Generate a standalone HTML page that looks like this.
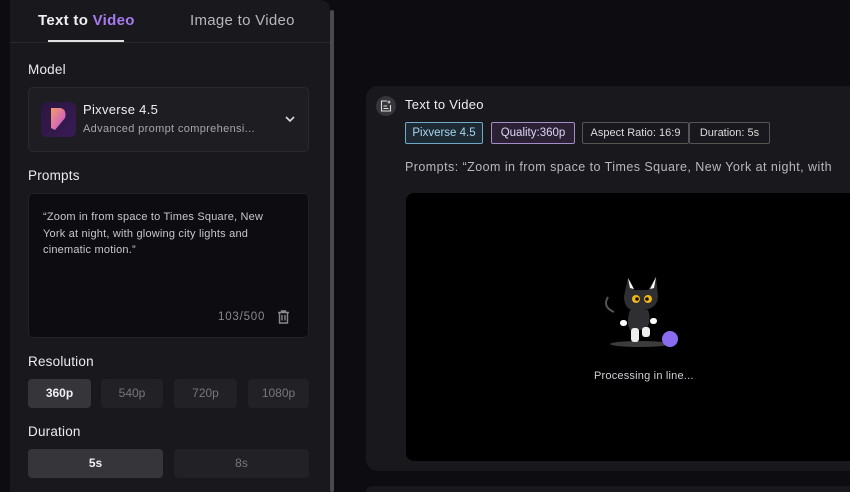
<!DOCTYPE html>
<html><head><style>
*{box-sizing:border-box;margin:0;padding:0}
html,body{width:850px;height:492px;overflow:hidden}
body{background:#0d0c11;font-family:"Liberation Sans",sans-serif;color:#e8e8ea;position:relative}
.panel{position:absolute;left:10px;top:0;width:320px;height:492px;background:#19181d;border-radius:0 10px 0 0}
.sb{position:absolute;left:330px;top:10px;width:4px;height:482px;background:#4a494e;border-radius:2px}
.tab{position:absolute;top:12px;font-size:15px;letter-spacing:.3px}
.lbl{position:absolute;left:28px;font-size:13.5px;color:#ececee;letter-spacing:.2px}
.box{position:absolute;border-radius:5px}
.btn{position:absolute;height:29px;border-radius:4px;background:#222126;color:#77767b;font-size:12px;text-align:center;line-height:29px}
.card{position:absolute;left:366px;top:86px;width:500px;height:385px;background:#19181d;border-radius:12px}
.tag{position:absolute;top:122px;height:22px;font-size:11.5px;line-height:20px;text-align:center;border:1px solid #555;color:#ddd;border-radius:2px;white-space:nowrap}
</style></head><body>
<div class="panel"></div>
<div class="sb"></div>
<div class="tab" style="left:38px;font-weight:bold;color:#f0f0f2">Text to <span style="color:#a77bf0">Video</span></div>
<div style="position:absolute;left:48px;top:40px;width:76px;height:2px;background:#e0e0e0"></div>
<div class="tab" style="left:190px;color:#b8b8bc">Image to Video</div>
<div style="position:absolute;left:10px;top:42px;width:320px;height:1px;background:#2a292e"></div>
<div class="lbl" style="top:62px">Model</div>
<div class="box" style="left:28px;top:87px;width:281px;height:65px;background:#1e1d22;border:1px solid #2a292e"></div>
<div style="position:absolute;left:41px;top:102px;width:35px;height:35px;border-radius:6px;background:linear-gradient(135deg,#2a1640,#3a1b55)"></div>
<svg style="position:absolute;left:47px;top:106px" width="24" height="28" viewBox="0 0 24 28"><defs><linearGradient id="g" x1="0" y1="0" x2="1" y2="1"><stop offset="0" stop-color="#f59a6a"/><stop offset="1" stop-color="#c04fe0"/></linearGradient></defs><path d="M4 2 L14 2 Q20 4 18 12 L8 24 L4 22 Z" fill="url(#g)"/></svg>
<div style="position:absolute;left:83px;top:102px;font-size:13px;color:#f0f0f2;letter-spacing:.3px">Pixverse 4.5</div>
<div style="position:absolute;left:83px;top:123px;font-size:11px;color:#a8a8ac;letter-spacing:.35px">Advanced prompt comprehensi...</div>
<svg style="position:absolute;left:285px;top:115px" width="10" height="8" viewBox="0 0 10 8"><path d="M1 2 L5 6 L9 2" stroke="#ddd" stroke-width="1.6" fill="none"/></svg>
<div class="lbl" style="top:168px">Prompts</div>
<div class="box" style="left:28px;top:193px;width:281px;height:145px;background:#0d0c10;border:1px solid #232227"></div>
<div style="position:absolute;left:43px;top:209px;width:236px;font-size:11px;line-height:16.5px;color:#c8c8cc;letter-spacing:.2px">“Zoom in from space to Times Square, New York at night, with glowing city lights and cinematic motion.”</div>
<div style="position:absolute;left:218px;top:311px;font-size:11.5px;color:#8a898e;letter-spacing:.8px">103/500</div>
<svg style="position:absolute;left:277px;top:310px" width="13" height="14" viewBox="0 0 13 14"><path d="M1 2.5 H12 M4.5 2.5 V1 H8.5 V2.5 M2.5 2.5 V13 H10.5 V2.5 M5 5 V10.5 M8 5 V10.5" stroke="#8a898e" stroke-width="1.4" fill="none"/></svg>
<div class="lbl" style="top:354px">Resolution</div>
<div class="btn" style="left:28px;top:379px;width:63px;background:#36353a;color:#f0f0f2;font-weight:bold">360p</div>
<div class="btn" style="left:101px;top:379px;width:62px">540p</div>
<div class="btn" style="left:174px;top:379px;width:63px">720p</div>
<div class="btn" style="left:248px;top:379px;width:61px">1080p</div>
<div class="lbl" style="top:424px">Duration</div>
<div class="btn" style="left:28px;top:449px;width:135px;background:#36353a;color:#f0f0f2;font-weight:bold">5s</div>
<div class="btn" style="left:174px;top:449px;width:135px">8s</div>

<div class="card"></div>
<div style="position:absolute;left:376px;top:96px;width:20px;height:20px;border-radius:50%;background:#36353a"></div>
<svg style="position:absolute;left:380px;top:100px" width="12" height="12" viewBox="0 0 12 12"><path d="M7 1 H1.5 V11 H10.5 V5 M3.5 6 H7 M3.5 8.5 H8.5 M9 0.5 V3.5 M7.5 2 H10.5" stroke="#ddd" stroke-width="1.1" fill="none"/></svg>
<div style="position:absolute;left:405px;top:97px;font-size:13px;color:#f0f0f2;letter-spacing:.3px">Text to Video</div>
<div class="tag" style="left:405px;width:78px;border-color:#6fa8c8;background:#1d2a33;color:#a9d4ec">Pixverse 4.5</div>
<div class="tag" style="left:491px;width:84px;border-color:#a58bc8;background:#2a2135;color:#e0d4f0">Quality:360p</div>
<div class="tag" style="left:582px;width:107px;font-size:11px">Aspect Ratio: 16:9</div>
<div class="tag" style="left:689px;width:81px;font-size:11px">Duration: 5s</div>
<div style="position:absolute;left:405px;top:160px;font-size:12.5px;color:#b8b8bc;white-space:nowrap;letter-spacing:.45px">Prompts: “Zoom in from space to Times Square, New York at night, with</div>
<div style="position:absolute;left:406px;top:193px;width:450px;height:268px;background:#000;border-radius:8px"></div>
<svg style="position:absolute;left:600px;top:272px" width="85" height="80" viewBox="0 0 85 80">
<ellipse cx="40" cy="72" rx="30" ry="3" fill="#555" opacity=".7"/>
<path d="M8 25 Q2 35 14 40" stroke="#555" stroke-width="2" fill="none"/>
<path d="M28 6 L34 18 L48 18 L56 5 L58 24 Q58 36 44 38 L32 38 Q24 36 24 24 Z" fill="#2f2f33"/>
<path d="M28 6 L30 16 L34 17 Z M56 5 L54 16 L50 17Z" fill="#fff"/>
<circle cx="36" cy="27" r="4" fill="#f2b51a"/><circle cx="48" cy="27" r="4" fill="#f2b51a"/>
<circle cx="37" cy="27" r="1.8" fill="#111"/><circle cx="47" cy="27" r="1.8" fill="#111"/>
<path d="M30 38 Q26 50 30 58 L46 58 Q52 48 48 38 Z" fill="#2f2f33"/>
<rect x="20" y="48" width="7" height="6" rx="3" fill="#fff"/><rect x="50" y="46" width="7" height="6" rx="3" fill="#fff"/>
<rect x="31" y="56" width="8" height="14" rx="3" fill="#eee"/><rect x="42" y="55" width="8" height="10" rx="3" fill="#eee"/>
<circle cx="70" cy="67" r="8" fill="#8a6cf0"/>
</svg>
<div style="position:absolute;left:594px;top:370px;font-size:11px;color:#d0d0d4;letter-spacing:.2px">Processing in line...</div>
<div style="position:absolute;left:366px;top:486px;width:500px;height:6px;background:#19181d;border-radius:12px 12px 0 0"></div>
</body></html>
